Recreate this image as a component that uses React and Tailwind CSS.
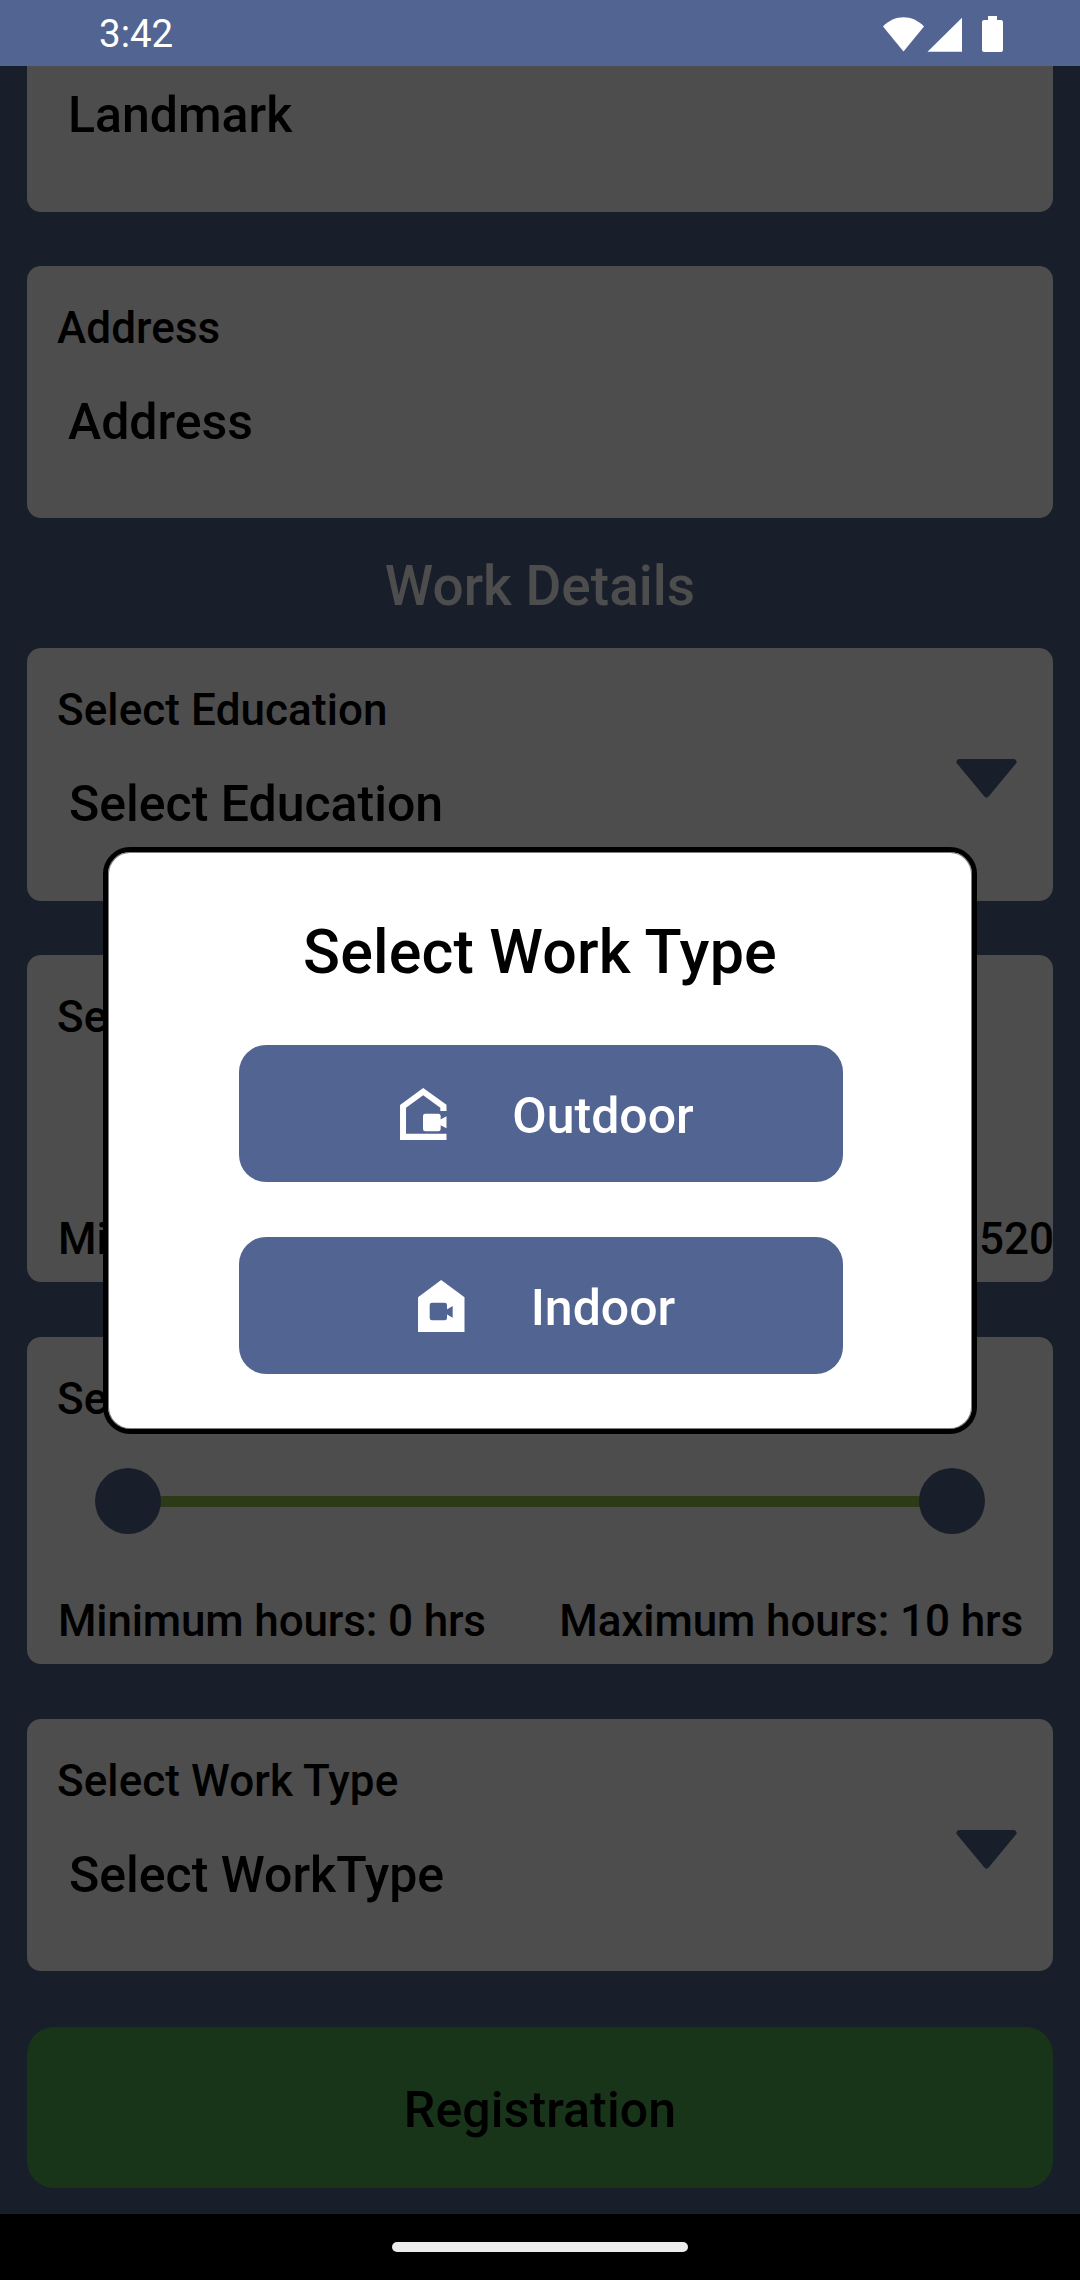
function Label({ children, className = "tracking-[0.08px]" }) {
  return <div className={`text-[44px] leading-[52px] whitespace-nowrap ${className}`}>{children}</div>;
}

function Value({ children, className = "pl-[11px]" }) {
  return <div className={`text-[50px] leading-[58px] whitespace-nowrap ${className}`}>{children}</div>;
}

function Caret() {
  return (
    <svg className="mr-[6px] h-[39px] w-[61px]" viewBox="0 0 61 39" fill="#191e2b">
      <path d="M3.5 0H57.5Q61 0.4 60.6 3.8L32.6 37.6Q30.5 39.8 28.4 37.6L0.4 3.8Q0 0.4 3.5 0Z" />
    </svg>
  );
}

function Field({ label, value, caret, className }) {
  return (
    <section className={`flex justify-between rounded-[14px] bg-[#4d4d4d] px-[30px] pt-[36px] ${className}`}>
      <div className="flex flex-col gap-[39px]">
        <Label>{label}</Label>
        <Value className={caret ? "pl-[12px]" : "pl-[11px]"}>{value}</Value>
      </div>
      {caret && (
        <div className="pt-[75px]">
          <Caret />
        </div>
      )}
    </section>
  );
}

function StatusBar() {
  return (
    <header className="flex h-[66px] shrink-0 items-center justify-between bg-[#526592] pr-[77px] pl-[99px] text-white">
      <span className="pt-[1px] text-[38.5px] leading-[46px] font-normal">3:42</span>
      <svg className="mt-[2px] h-[36px] w-[120px]" viewBox="0 0 120 36" fill="#fff">
        <path d="M0 10.5C11.5 -1.9 29.500 -1.9 41 10.500L20.500 35.500Z" />
        <path d="M44.500 35.800L79 1.700V35.800Z" />
        <path d="M105 0H114V4H118Q120 4 120 6V34Q120 36 118 36H101Q99 36 99 34V6Q99 4 101 4H105Z" />
      </svg>
    </header>
  );
}

function OutdoorIcon() {
  return (
    <svg className="h-[52.3px] w-[46.7px]" viewBox="118 83 140 157" fill="#fff">
      <path d="M118 134L187.500 83L257.500 133V152H239V142L187.500 105L136 142V220H257.500V239.500H118Z" />
      <rect x="187" y="160" width="53" height="53" rx="7" />
      <path d="M238 178L257.500 168V204L238 194Z" />
    </svg>
  );
}

function IndoorIcon() {
  return (
    <svg className="h-[52.3px] w-[46.7px]" viewBox="175 659 140 157">
      <path fill="#fff" d="M175 711L244.500 659L314.500 711V815.500H175Z" />
      <rect x="210" y="727" width="52" height="53" rx="7" fill="#526592" />
      <path d="M260 748L279 737V772L260 761Z" fill="#526592" />
    </svg>
  );
}

function TypeButton({ icon, children }) {
  return (
    <button className="flex h-[137px] w-[604px] items-center justify-center gap-[54px] rounded-[27px] bg-[#526592] text-[50px] leading-[58px] font-medium text-white">
      <span className="flex w-[70px] justify-center pt-[1px]">{icon}</span>
      <span className="pt-[4px]">{children}</span>
    </button>
  );
}

export default function App() {
  return (
    <div className="relative flex h-[2280px] w-[1080px] flex-col overflow-hidden bg-[#191e2b] font-['Roboto',sans-serif] font-medium text-black">
      <StatusBar />

      <main className="flex h-[2148px] shrink-0 flex-col px-[27px]">
        <section className="h-[146px] rounded-b-[14px] bg-[#4d4d4d] px-[30px] pt-[20px]">
          <Value>Landmark</Value>
        </section>

        <Field className="mt-[54px] h-[252px]" label="Address" value="Address" />

        <h2 className="h-[130px] pt-[36px] text-center text-[55px] leading-[64px] text-[#4d4d4d]">Work Details</h2>

        <Field className="h-[253px]" label="Select Education" value="Select Education" caret />

        <section className="mt-[54px] flex h-[327px] flex-col justify-between rounded-[14px] bg-[#4d4d4d] pt-[36px] pb-[17px] pl-[30px]">
          <Label>Select Salary</Label>
          <div className="flex justify-between">
            <Label className="pl-px">Minimum</Label>
            <Label className="-mr-px">520</Label>
          </div>
        </section>

        <section className="mt-[55px] flex h-[327px] flex-col rounded-[14px] bg-[#4d4d4d] px-[30px] pt-[36px]">
          <Label>Select Hours</Label>
          <div className="mt-[43px] flex items-center px-[38px]">
            <div className="relative size-[66px] rounded-full bg-[#191e2b]" />
            <div className="-mx-1 mt-px h-[11px] flex-1 bg-[#2d3a17]" />
            <div className="relative size-[66px] rounded-full bg-[#191e2b]" />
          </div>
          <div className="mt-[61px] flex justify-between">
            <Label className="pl-px tracking-[-0.14px]">Minimum hours: 0 hrs</Label>
            <Label className="tracking-[-0.1px]">Maximum hours: 10 hrs</Label>
          </div>
        </section>

        <Field className="mt-[55px] h-[252px]" label="Select Work Type" value="Select WorkType" caret />

        <button className="mt-[56px] h-[161px] rounded-[27px] bg-[#183419] pt-[4px] text-[50px] leading-[58px] font-medium tracking-[0.1px]">
          Registration
        </button>
      </main>

      <footer className="flex h-[66px] shrink-0 justify-center bg-black pt-[28px]">
        <div className="h-[10px] w-[296px] rounded-full bg-[#ececec]" />
      </footer>

      <div
        role="dialog"
        className="absolute top-[847px] left-[103px] flex h-[587px] w-[874px] flex-col items-center rounded-[27px] border-[5px] border-black bg-white pl-[2px] shadow-[inset_0_0_0_1px_#808080]"
      >
        <h1 className="mt-[65px] pr-[2px] text-[61px] leading-[70px] tracking-[0.15px]">Select Work Type</h1>
        <div className="mt-[58px] flex flex-col gap-[55px]">
          <TypeButton icon={<OutdoorIcon />}>Outdoor</TypeButton>
          <TypeButton icon={<IndoorIcon />}>Indoor</TypeButton>
        </div>
      </div>
    </div>
  );
}
